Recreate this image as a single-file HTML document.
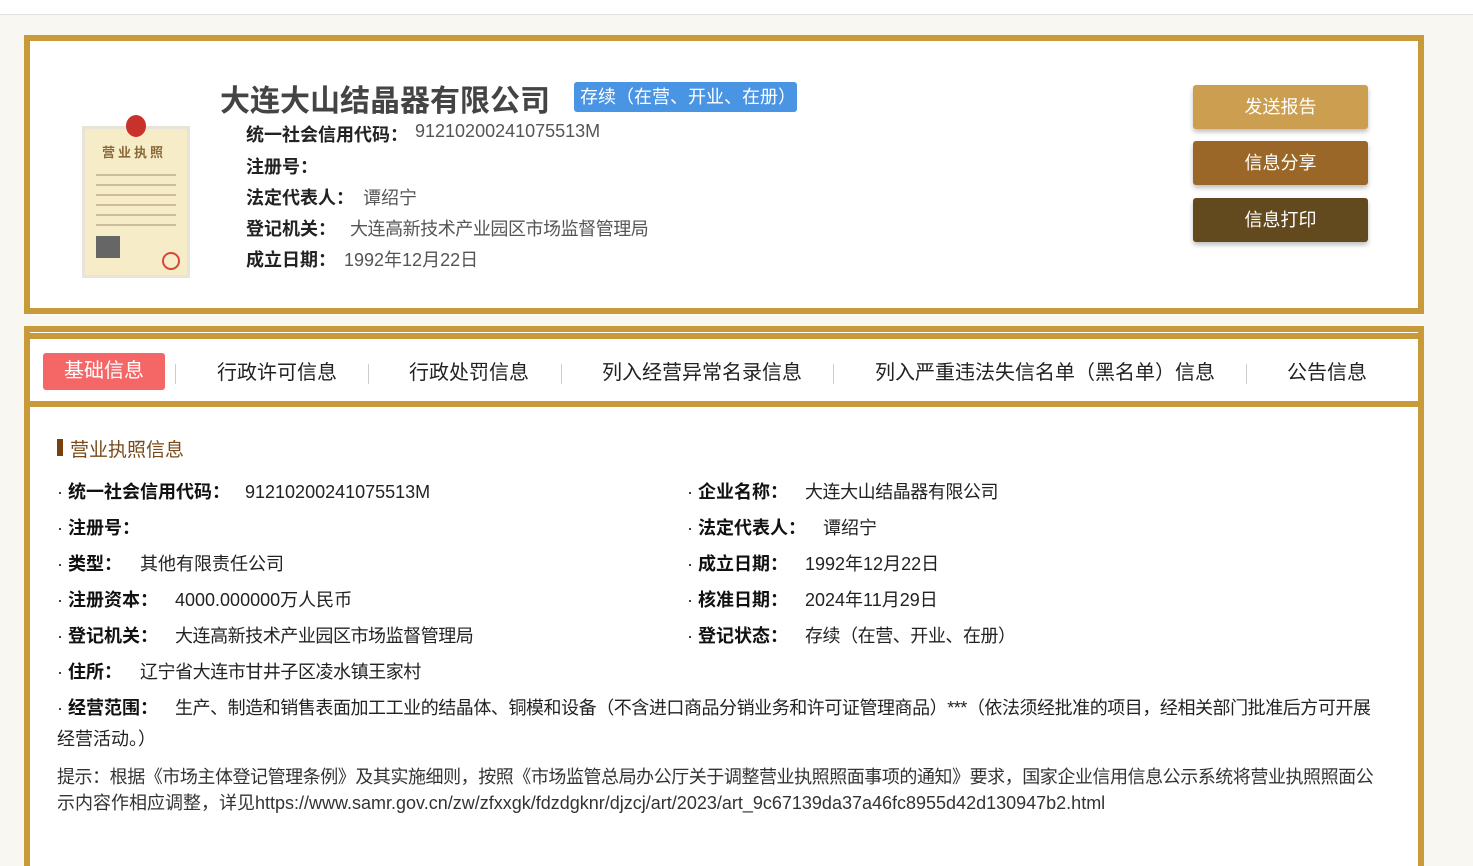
<!DOCTYPE html>
<html><head><meta charset="utf-8"><style>
*{margin:0;padding:0;box-sizing:border-box}
body{width:1473px;height:851px;overflow:hidden;background:#f9f7f1;font-family:"Liberation Sans","Noto Sans CJK SC",sans-serif;color:#333;position:relative}
.a{position:absolute;white-space:nowrap}
.top{position:absolute;left:0;top:0;width:1473px;height:15px;background:#fff;border-bottom:1px solid #e2e2e2}
.box1{position:absolute;left:24px;top:35px;width:1400px;height:279px;border:6px solid #c99a3a;background:#fff}
.box2{position:absolute;left:24px;top:326px;width:1400px;height:540px;border:6px solid #c99a3a;border-bottom:none;background:#fff}
.btn{position:absolute;left:1193px;width:175px;height:44px;border-radius:3px;color:#fff;font-size:18px;text-align:center;line-height:44px;box-shadow:0 3px 5px rgba(0,0,0,.25)}
.lb{font-weight:bold;color:#222;font-size:18px}
.v{font-size:18px;color:#555}
.r{font-size:18px;color:#222;line-height:22px}
.r b{color:#111}
.tab{position:absolute;top:355px;height:37px;line-height:37px;font-size:20px;color:#222}
.sep{position:absolute;top:364px;width:1px;height:20px;background:#ccc}
.t{letter-spacing:-0.45px}
</style></head><body>
<div class="top"></div>
<div class="box1"></div>
<div class="a" style="left:82px;top:126px;width:108px;height:152px;background:#f7ecc8;border:3px solid #e8e4da"></div>
<div class="a" style="left:126px;top:115px;width:20px;height:22px;border-radius:50%;background:#c8322a"></div>
<div class="a" style="left:102px;top:142px;font-size:13px;font-weight:bold;color:#8a6a3a;letter-spacing:3px">营业执照</div>
<div class="a" style="left:96px;top:170px;width:80px;height:60px;background:repeating-linear-gradient(#f7ecc8 0 4px,#b8a88a 4px 6px,#f7ecc8 6px 10px);opacity:.7"></div>
<div class="a" style="left:96px;top:236px;width:24px;height:22px;background:#666"></div>
<div class="a" style="left:162px;top:252px;width:18px;height:18px;border-radius:50%;border:2px solid #d8453a"></div>

<div class="a" style="left:220px;top:76px;font-size:30px;font-weight:bold;color:#444">大连大山结晶器有限公司</div>
<div class="a" style="left:574px;top:82px;width:223px;height:30px;background:#4a94e4;border-radius:3px;color:#fff;font-size:18px;line-height:30px;padding-left:6px">存续（在营、开业、在册）</div>
<div class="a lb" style="left:246px;top:121px">统一社会信用代码：</div><div class="a v" style="left:415px;top:121px">91210200241075513M</div>
<div class="a lb" style="left:246px;top:153px">注册号：</div>
<div class="a lb" style="left:246px;top:184px">法定代表人：</div><div class="a v" style="left:363px;top:184px">谭绍宁</div>
<div class="a lb" style="left:246px;top:215px">登记机关：</div><div class="a v t" style="left:350px;top:215px">大连高新技术产业园区市场监督管理局</div>
<div class="a lb" style="left:246px;top:246px">成立日期：</div><div class="a v" style="left:344px;top:246px">1992年12月22日</div>

<div class="btn" style="top:85px;background:#cb9e50">发送报告</div>
<div class="btn" style="top:141px;background:#9a6728">信息分享</div>
<div class="btn" style="top:198px;background:#634a1e">信息打印</div>

<div class="box2"></div>
<div class="a" style="left:30px;top:332px;width:1388px;height:1px;background:#fff"></div>
<div class="a" style="left:30px;top:333px;width:1388px;height:6px;background:#c99a3a"></div>
<div class="a" style="left:30px;top:401px;width:1388px;height:6px;background:#c99a3a"></div>

<div class="tab" style="left:43px;top:353px;width:122px;background:#f56666;border-radius:3px;color:#fff;text-align:center">基础信息</div>
<div class="sep" style="left:175px"></div>
<div class="tab" style="left:217px">行政许可信息</div>
<div class="sep" style="left:368px"></div>
<div class="tab" style="left:409px">行政处罚信息</div>
<div class="sep" style="left:561px"></div>
<div class="tab" style="left:602px">列入经营异常名录信息</div>
<div class="sep" style="left:833px"></div>
<div class="tab" style="left:875px">列入严重违法失信名单（黑名单）信息</div>
<div class="sep" style="left:1246px"></div>
<div class="tab" style="left:1287px">公告信息</div>

<div class="a" style="left:57px;top:439px;width:6px;height:17px;background:#7a3f0a"></div>
<div class="a" style="left:70px;top:435px;font-size:19px;color:#7a4a1a">营业执照信息</div>

<div class="a r" style="left:57px;top:481px">· <b>统一社会信用代码：</b></div><div class="a r" style="left:245px;top:481px">91210200241075513M</div>
<div class="a r" style="left:687px;top:481px">· <b>企业名称：</b></div><div class="a r t" style="left:805px;top:481px">大连大山结晶器有限公司</div>
<div class="a r" style="left:57px;top:517px">· <b>注册号：</b></div>
<div class="a r" style="left:687px;top:517px">· <b>法定代表人：</b></div><div class="a r" style="left:823px;top:517px">谭绍宁</div>
<div class="a r" style="left:57px;top:553px">· <b>类型：</b></div><div class="a r" style="left:140px;top:553px">其他有限责任公司</div>
<div class="a r" style="left:687px;top:553px">· <b>成立日期：</b></div><div class="a r" style="left:805px;top:553px">1992年12月22日</div>
<div class="a r" style="left:57px;top:589px">· <b>注册资本：</b></div><div class="a r" style="left:175px;top:589px">4000.000000万人民币</div>
<div class="a r" style="left:687px;top:589px">· <b>核准日期：</b></div><div class="a r" style="left:805px;top:589px">2024年11月29日</div>
<div class="a r" style="left:57px;top:625px">· <b>登记机关：</b></div><div class="a r t" style="left:175px;top:625px">大连高新技术产业园区市场监督管理局</div>
<div class="a r" style="left:687px;top:625px">· <b>登记状态：</b></div><div class="a r t" style="left:805px;top:625px">存续（在营、开业、在册）</div>
<div class="a r" style="left:57px;top:661px">· <b>住所：</b></div><div class="a r t" style="left:140px;top:661px">辽宁省大连市甘井子区凌水镇王家村</div>
<div class="a r" style="left:57px;top:697px">· <b>经营范围：</b></div><div class="a r t" style="left:175px;top:697px">生产、制造和销售表面加工工业的结晶体、铜模和设备（不含进口商品分销业务和许可证管理商品）***（依法须经批准的项目，经相关部门批准后方可开展</div>
<div class="a r" style="left:57px;top:728px">经营活动。）</div>
<div class="a r t" style="left:57px;top:766px;color:#333">提示：根据《市场主体登记管理条例》及其实施细则，按照《市场监管总局办公厅关于调整营业执照照面事项的通知》要求，国家企业信用信息公示系统将营业执照照面公</div>
<div class="a r" style="left:57px;top:792px;color:#333">示内容作相应调整，详见https://www.samr.gov.cn/zw/zfxxgk/fdzdgknr/djzcj/art/2023/art_9c67139da37a46fc8955d42d130947b2.html</div>
</body></html>
